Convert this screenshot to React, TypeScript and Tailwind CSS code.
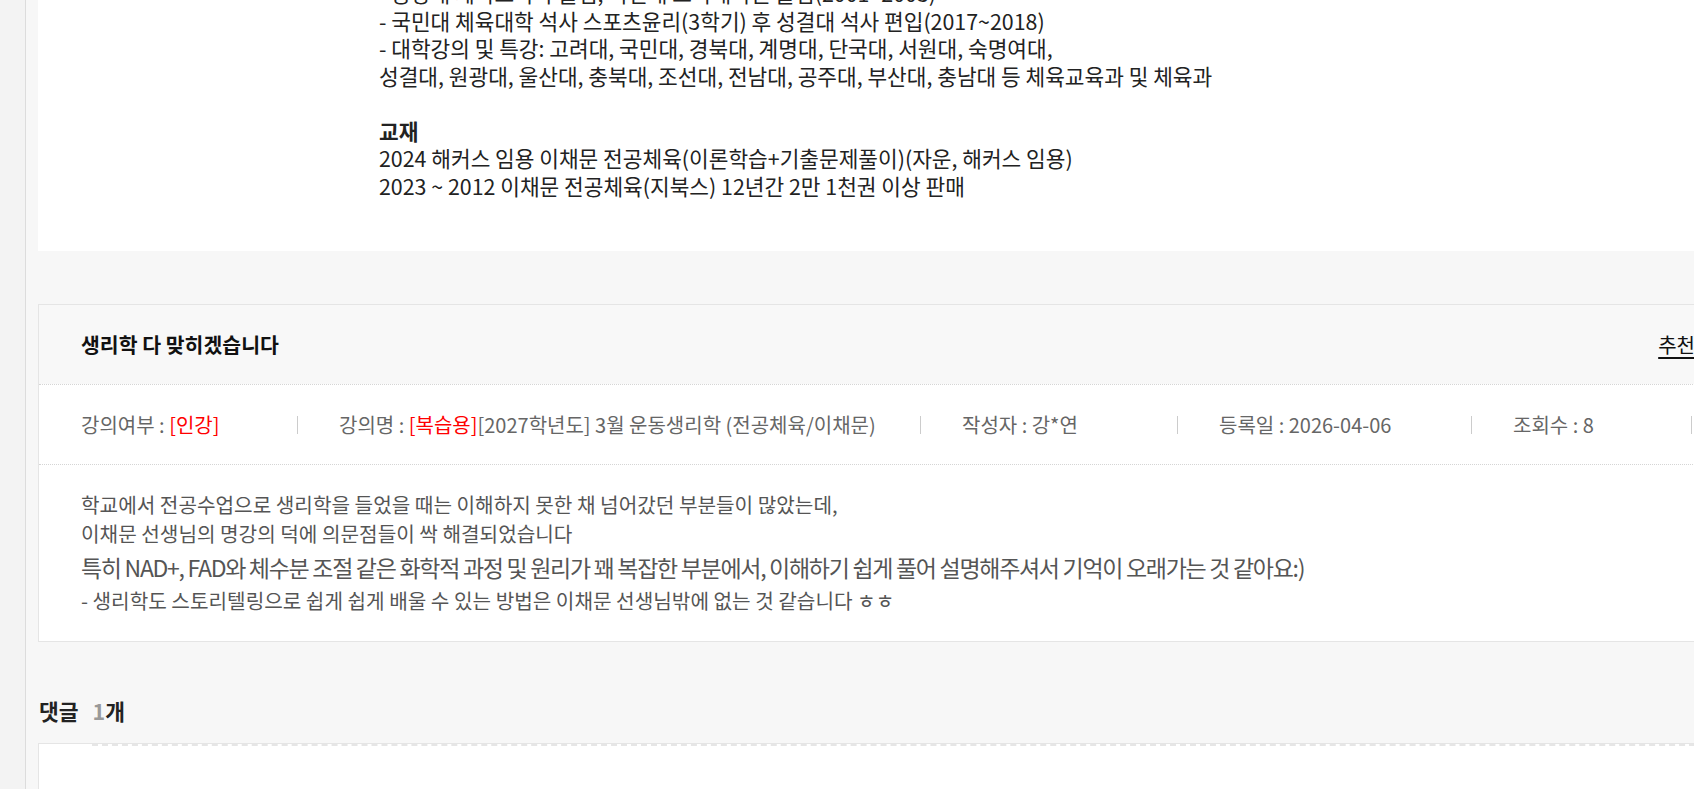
export default function App() {
  const font = "font-['Noto_Sans_CJK_KR','Noto_Sans',sans-serif]";

  return (
    <div className={`flex h-[789px] w-[1694px] overflow-hidden bg-[#f7f7f7] ${font}`}>
      {/* left rail */}
      <div className="w-[26px] shrink-0 border-r border-[#dcdcdc] bg-[#f3f3f3]" />

      <main className="w-[1720px] shrink-0 pl-[12px]">
        {/* teacher profile card (scrolled) */}
        <section className="h-[251px] w-[1720px] overflow-hidden bg-white">
          <div className="-mt-[21px] pl-[341px] text-[21.4px] leading-[27.5px] text-[#222]">
            <p>- 중앙대 체육교육과 졸업, 국민대 교육대학원 졸업(2001~2003)</p>
            <p>- 국민대 체육대학 석사 스포츠윤리(3학기) 후 성결대 석사 편입(2017~2018)</p>
            <p>- 대학강의 및 특강: 고려대, 국민대, 경북대, 계명대, 단국대, 서원대, 숙명여대,</p>
            <p>성결대, 원광대, 울산대, 충북대, 조선대, 전남대, 공주대, 부산대, 충남대 등 체육교육과 및 체육과</p>
            <p>&nbsp;</p>
            <p className="font-bold">교재</p>
            <p>2024 해커스 임용 이채문 전공체육(이론학습+기출문제풀이)(자운, 해커스 임용)</p>
            <p>2023 ~ 2012 이채문 전공체육(지북스) 12년간 2만 1천권 이상 판매</p>
          </div>
        </section>

        {/* review card */}
        <section className="mt-[53px] w-[1698px] border border-[#e5e5e5] bg-white">
          <div className="flex h-[79px] items-center justify-between bg-[#f8f8f8] pl-[42px] pr-[40px]">
            <h2 className="text-[20.5px] font-bold text-[#111]">생리학 다 맞히겠습니다</h2>
            <span className="text-[20px] text-[#111] underline underline-offset-4">추천</span>
          </div>

          <ul className="flex h-[81px] items-center border-y border-dotted border-[#d5d5d5] pl-[42px] text-[20px] text-[#666]">
            <li className="w-[216px] shrink-0">
              강의여부 : <span className="text-[#ff0000]">[인강]</span>
            </li>
            <li className="flex w-[623px] shrink-0 items-center">
              <span className="h-[18px] w-px bg-[#cccccc]" />
              <span className="pl-[41px]">
                강의명 : <span className="text-[#ff0000]">[복습용]</span>[2027학년도] 3월 운동생리학 (전공체육/이채문)
              </span>
            </li>
            <li className="flex w-[257px] shrink-0 items-center">
              <span className="h-[18px] w-px bg-[#cccccc]" />
              <span className="pl-[41px]">작성자 : 강*연</span>
            </li>
            <li className="flex w-[294px] shrink-0 items-center">
              <span className="h-[18px] w-px bg-[#cccccc]" />
              <span className="pl-[41px]">등록일 : 2026-04-06</span>
            </li>
            <li className="flex w-[220px] shrink-0 items-center">
              <span className="h-[18px] w-px bg-[#cccccc]" />
              <span className="pl-[41px]">조회수 : 8</span>
            </li>
            <li className="flex shrink-0 items-center">
              <span className="h-[18px] w-px bg-[#cccccc]" />
              <span className="pl-[41px]">추천 : 0</span>
            </li>
          </ul>

          <div className="pb-[26px] pl-[42px] pt-[25px] text-[#555]">
            <p className="text-[20.2px] leading-[29px]">
              학교에서 전공수업으로 생리학을 들었을 때는 이해하지 못한 채 넘어갔던 부분들이 많았는데,
            </p>
            <p className="text-[20.2px] leading-[29px]">이채문 선생님의 명강의 덕에 의문점들이 싹 해결되었습니다</p>
            <p className="text-[23px] leading-[38px] tracking-[-1.3px]">
              특히 NAD+, FAD와 체수분 조절 같은 화학적 과정 및 원리가 꽤 복잡한 부분에서, 이해하기 쉽게 풀어 설명해주셔서 기억이 오래가는 것 같아요:)
            </p>
            <p className="text-[20.2px] leading-[29px]">
              - 생리학도 스토리텔링으로 쉽게 쉽게 배울 수 있는 방법은 이채문 선생님밖에 없는 것 같습니다 ㅎㅎ
            </p>
          </div>
        </section>

        {/* comments */}
        <div className="mt-[56px] flex items-center gap-[14px] pl-[1px] text-[21.5px] font-bold leading-[26px]">
          <span className="text-[#222]">댓글</span>
          <span className="text-[#222]">
            <span className="text-[#999]">1</span>개
          </span>
        </div>
        <section className="mt-[19px] h-[80px] w-[1698px] border border-[#e5e5e5] bg-white">
          <div className="ml-[53px] border-t-2 border-dashed border-[#e6e6e6]" />
        </section>
      </main>
    </div>
  );
}
